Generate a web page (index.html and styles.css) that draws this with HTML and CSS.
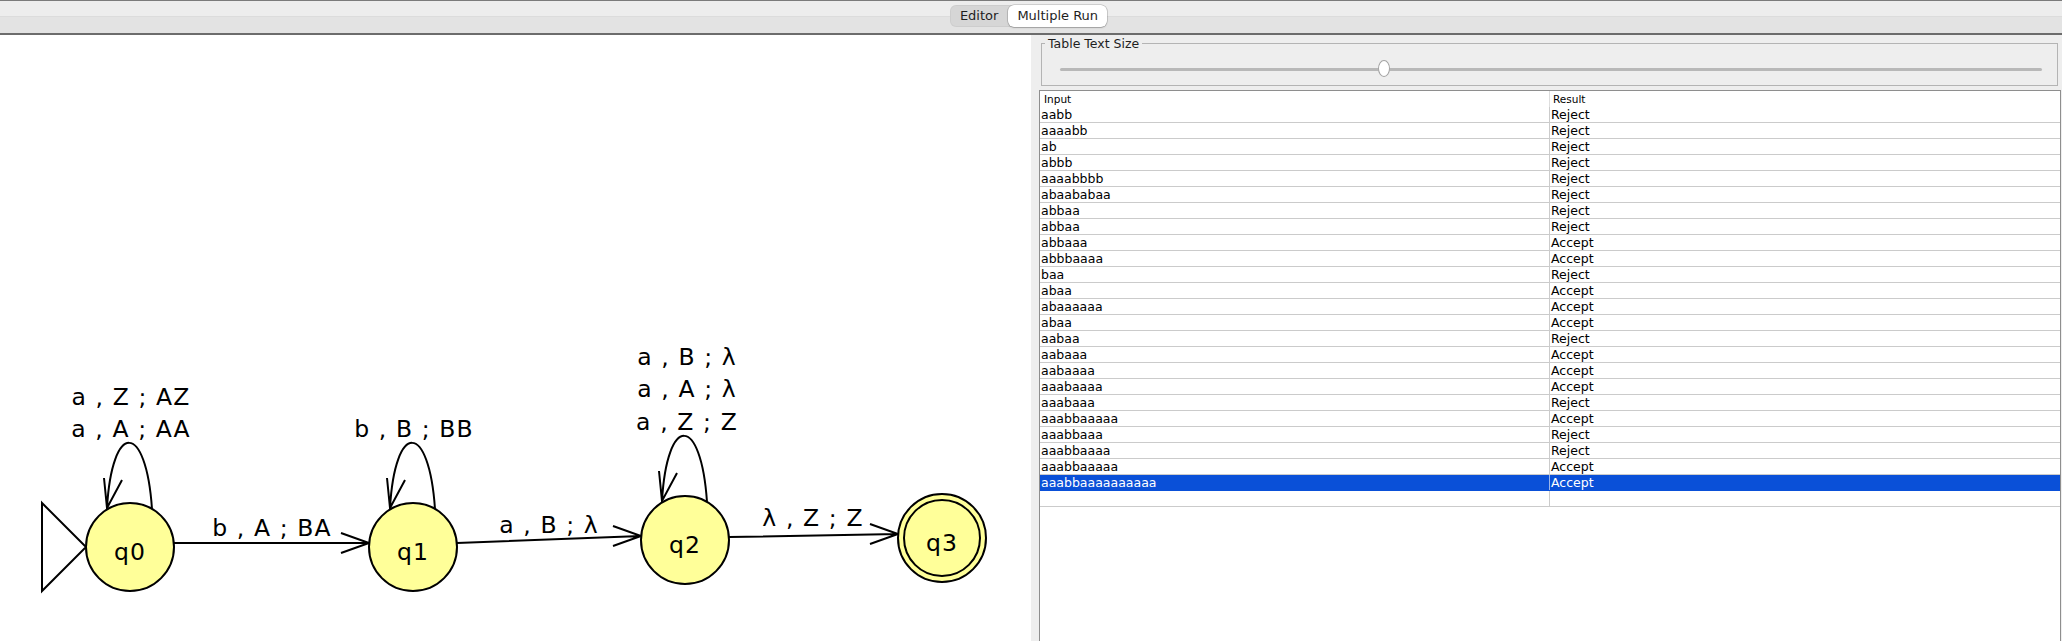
FILE: index.html
```html
<!DOCTYPE html>
<html>
<head>
<meta charset="utf-8">
<title>Multiple Run</title>
<link rel="stylesheet" href="styles.css">
</head>
<body>
<div class="app">
  <header class="topbar">
    <div class="seg">
      <span class="seg-item">Editor</span>
      <span class="seg-item active">Multiple Run</span>
    </div>
  </header>
  <main class="content">
    <section class="canvas">
      <svg class="diagram" width="1031" height="606" viewBox="0 35 1031 606" xmlns="http://www.w3.org/2000/svg">
        <g class="strokes">
          <polygon points="42,503 86,547 42,591"/>
          <path d="M174,543 L369,543 M341,533 L369,543 L341,553"/>
          <path d="M457,543 L641,536 M613,526 L641,536 L613,546"/>
          <path d="M729,537 L898,534 M870,524 L898,534 L870,544"/>
          <path d="M152,509 C146,421 112,421 107,508 M104,478 L107,508 L122,480"/>
          <path d="M435,509 C429,421 395,421 390,508 M387,478 L390,508 L405,480"/>
          <path d="M707,502 C701,414 667,414 662,501 M659,471 L662,501 L677,473"/>
        </g>
        <g class="states">
          <circle cx="130" cy="547" r="44"/>
          <circle cx="413" cy="547" r="44"/>
          <circle cx="685" cy="540" r="44"/>
          <circle cx="942" cy="538" r="44"/>
          <circle cx="942" cy="538" r="38"/>
        </g>
        <g class="labels">
          <text x="130" y="560">q0</text>
          <text x="413" y="560">q1</text>
          <text x="685" y="553">q2</text>
          <text x="942" y="551">q3</text>
          <text x="131" y="405">a , Z ; AZ</text>
          <text x="131" y="437">a , A ; AA</text>
          <text x="414" y="437">b , B ; BB</text>
          <text x="687" y="365">a , B ; λ</text>
          <text x="687" y="397">a , A ; λ</text>
          <text x="687" y="430">a , Z ; Z</text>
          <text x="272" y="536">b , A ; BA</text>
          <text x="549" y="533">a , B ; λ</text>
          <text x="813" y="526">λ , Z ; Z</text>
        </g>
      </svg>
    </section>
    <aside class="runner">
      <fieldset class="group">
        <legend>Table Text Size</legend>
        <div class="slider">
          <div class="track"><div class="thumb"></div></div>
        </div>
      </fieldset>
      <div class="table">
        <div class="row head"><div class="cell">Input</div><div class="cell">Result</div></div>
        <div class="row"><div class="cell">aabb</div><div class="cell">Reject</div></div>
        <div class="row"><div class="cell">aaaabb</div><div class="cell">Reject</div></div>
        <div class="row"><div class="cell">ab</div><div class="cell">Reject</div></div>
        <div class="row"><div class="cell">abbb</div><div class="cell">Reject</div></div>
        <div class="row"><div class="cell">aaaabbbb</div><div class="cell">Reject</div></div>
        <div class="row"><div class="cell">abaababaa</div><div class="cell">Reject</div></div>
        <div class="row"><div class="cell">abbaa</div><div class="cell">Reject</div></div>
        <div class="row"><div class="cell">abbaa</div><div class="cell">Reject</div></div>
        <div class="row"><div class="cell">abbaaa</div><div class="cell">Accept</div></div>
        <div class="row"><div class="cell">abbbaaaa</div><div class="cell">Accept</div></div>
        <div class="row"><div class="cell">baa</div><div class="cell">Reject</div></div>
        <div class="row"><div class="cell">abaa</div><div class="cell">Accept</div></div>
        <div class="row"><div class="cell">abaaaaaa</div><div class="cell">Accept</div></div>
        <div class="row"><div class="cell">abaa</div><div class="cell">Accept</div></div>
        <div class="row"><div class="cell">aabaa</div><div class="cell">Reject</div></div>
        <div class="row"><div class="cell">aabaaa</div><div class="cell">Accept</div></div>
        <div class="row"><div class="cell">aabaaaa</div><div class="cell">Accept</div></div>
        <div class="row"><div class="cell">aaabaaaa</div><div class="cell">Accept</div></div>
        <div class="row"><div class="cell">aaabaaa</div><div class="cell">Reject</div></div>
        <div class="row"><div class="cell">aaabbaaaaa</div><div class="cell">Accept</div></div>
        <div class="row"><div class="cell">aaabbaaa</div><div class="cell">Reject</div></div>
        <div class="row"><div class="cell">aaabbaaaa</div><div class="cell">Reject</div></div>
        <div class="row"><div class="cell">aaabbaaaaa</div><div class="cell">Accept</div></div>
        <div class="row sel"><div class="cell">aaabbaaaaaaaaaa</div><div class="cell">Accept</div></div>
        <div class="row"><div class="cell"></div><div class="cell"></div></div>
      </div>
    </aside>
  </main>
</div>
</body>
</html>
```
FILE: styles.css
```css
html, body {
  margin: 0;
  padding: 0;
}

body {
  width: 2062px;
  height: 641px;
  overflow: hidden;
  background: #ffffff;
  font-family: "DejaVu Sans", "Liberation Sans", sans-serif;
  color: #000;
}

.app {
  display: flex;
  flex-direction: column;
  height: 641px;
}

/* ---------- top bar ---------- */
.topbar {
  flex: none;
  height: 32px;
  border-top: 1px solid #7b7b7b;
  border-bottom: 2px solid #6c6c6c;
  background: linear-gradient(#ededed 0, #ededed 15px, #dcdcdc 15px, #dcdcdc 16px, #e3e3e3 16px);
  display: flex;
  justify-content: center;
  align-items: flex-start;
}

.seg {
  margin-top: 4px;
  margin-right: 5px;
  display: flex;
  height: 22px;
  background: #d6d6d6;
  border-radius: 6px;
  box-shadow: inset 0 0 0 1px rgba(0, 0, 0, 0.04);
}

.seg-item {
  font-size: 13px;
  line-height: 22px;
  padding: 0 10px;
  color: #1e1e1e;
}

.seg-item.active {
  background: #ffffff;
  border-radius: 6px;
  padding: 0 9px;
  box-shadow: 0 0 0 0.5px rgba(0, 0, 0, 0.25), 0 1px 1.5px rgba(0, 0, 0, 0.2);
}

/* ---------- content ---------- */
.content {
  flex: 1;
  display: flex;
  min-height: 0;
}

.canvas {
  flex: none;
  width: 1031px;
  background: #ffffff;
}

.diagram {
  display: block;
}

.strokes {
  fill: none;
  stroke: #000;
  stroke-width: 2;
  stroke-linejoin: miter;
}

.states circle {
  fill: #ffff99;
  stroke: #000;
  stroke-width: 2;
}

.labels text {
  font-family: "DejaVu Sans", sans-serif;
  font-size: 23.5px;
  letter-spacing: 1.1px;
  text-anchor: middle;
  fill: #000;
}

/* ---------- runner panel ---------- */
.runner {
  flex: 1;
  min-width: 0;
  background: #eeeeee;
  display: flex;
  flex-direction: column;
  padding: 0 1px 0 8px;
}

.group {
  margin: 1px 3px 0 2px;
  padding: 0;
  border: 1px solid #b4b4b4;
  min-width: 0;
}

.group legend {
  font-size: 12.5px;
  line-height: 15px;
  padding: 0 3px;
  margin-left: 3px;
  color: #1e1e1e;
}

.slider {
  height: 32px;
  padding-top: 2px;
  margin: 0 15px 0 18px;
  display: flex;
  align-items: center;
}

.track {
  position: relative;
  flex: 1;
  height: 3px;
  border-radius: 2px;
  background: #b8b8b8;
}

.thumb {
  position: absolute;
  left: calc(33.1% - 7px);
  top: -8px;
  width: 12px;
  height: 17px;
  border: 1px solid #a2a2a2;
  border-radius: 50%;
  background: #ffffff;
  box-sizing: border-box;
}

.table {
  flex: 1;
  margin-top: 4px;
  background: #ffffff;
  border: 1px solid #8e8e8e;
  border-bottom: none;
  display: flex;
  flex-direction: column;
}

.row {
  display: grid;
  grid-template-columns: 510px 1fr;
  height: 16px;
  box-sizing: border-box;
  border-bottom: 1px solid #cbcbcb;
  font-size: 12.5px;
  line-height: 15px;
}

.row .cell {
  padding-left: 1px;
  white-space: nowrap;
  overflow: hidden;
}

.row .cell:first-child {
  border-right: 1px solid #cbcbcb;
}

.row.head {
  border-bottom: none;
  font-size: 10.5px;
  line-height: 16px;
}

.row.head .cell:first-child {
  padding-left: 4px;
  border-right-color: #dedede;
}

.row.head .cell:last-child {
  padding-left: 3px;
}

.row.sel {
  background: #0a50d8;
  color: #ffffff;
  border-bottom-color: #0a50d8;
}

.row.sel .cell:first-child {
  border-right-color: #9db6e8;
}
```
